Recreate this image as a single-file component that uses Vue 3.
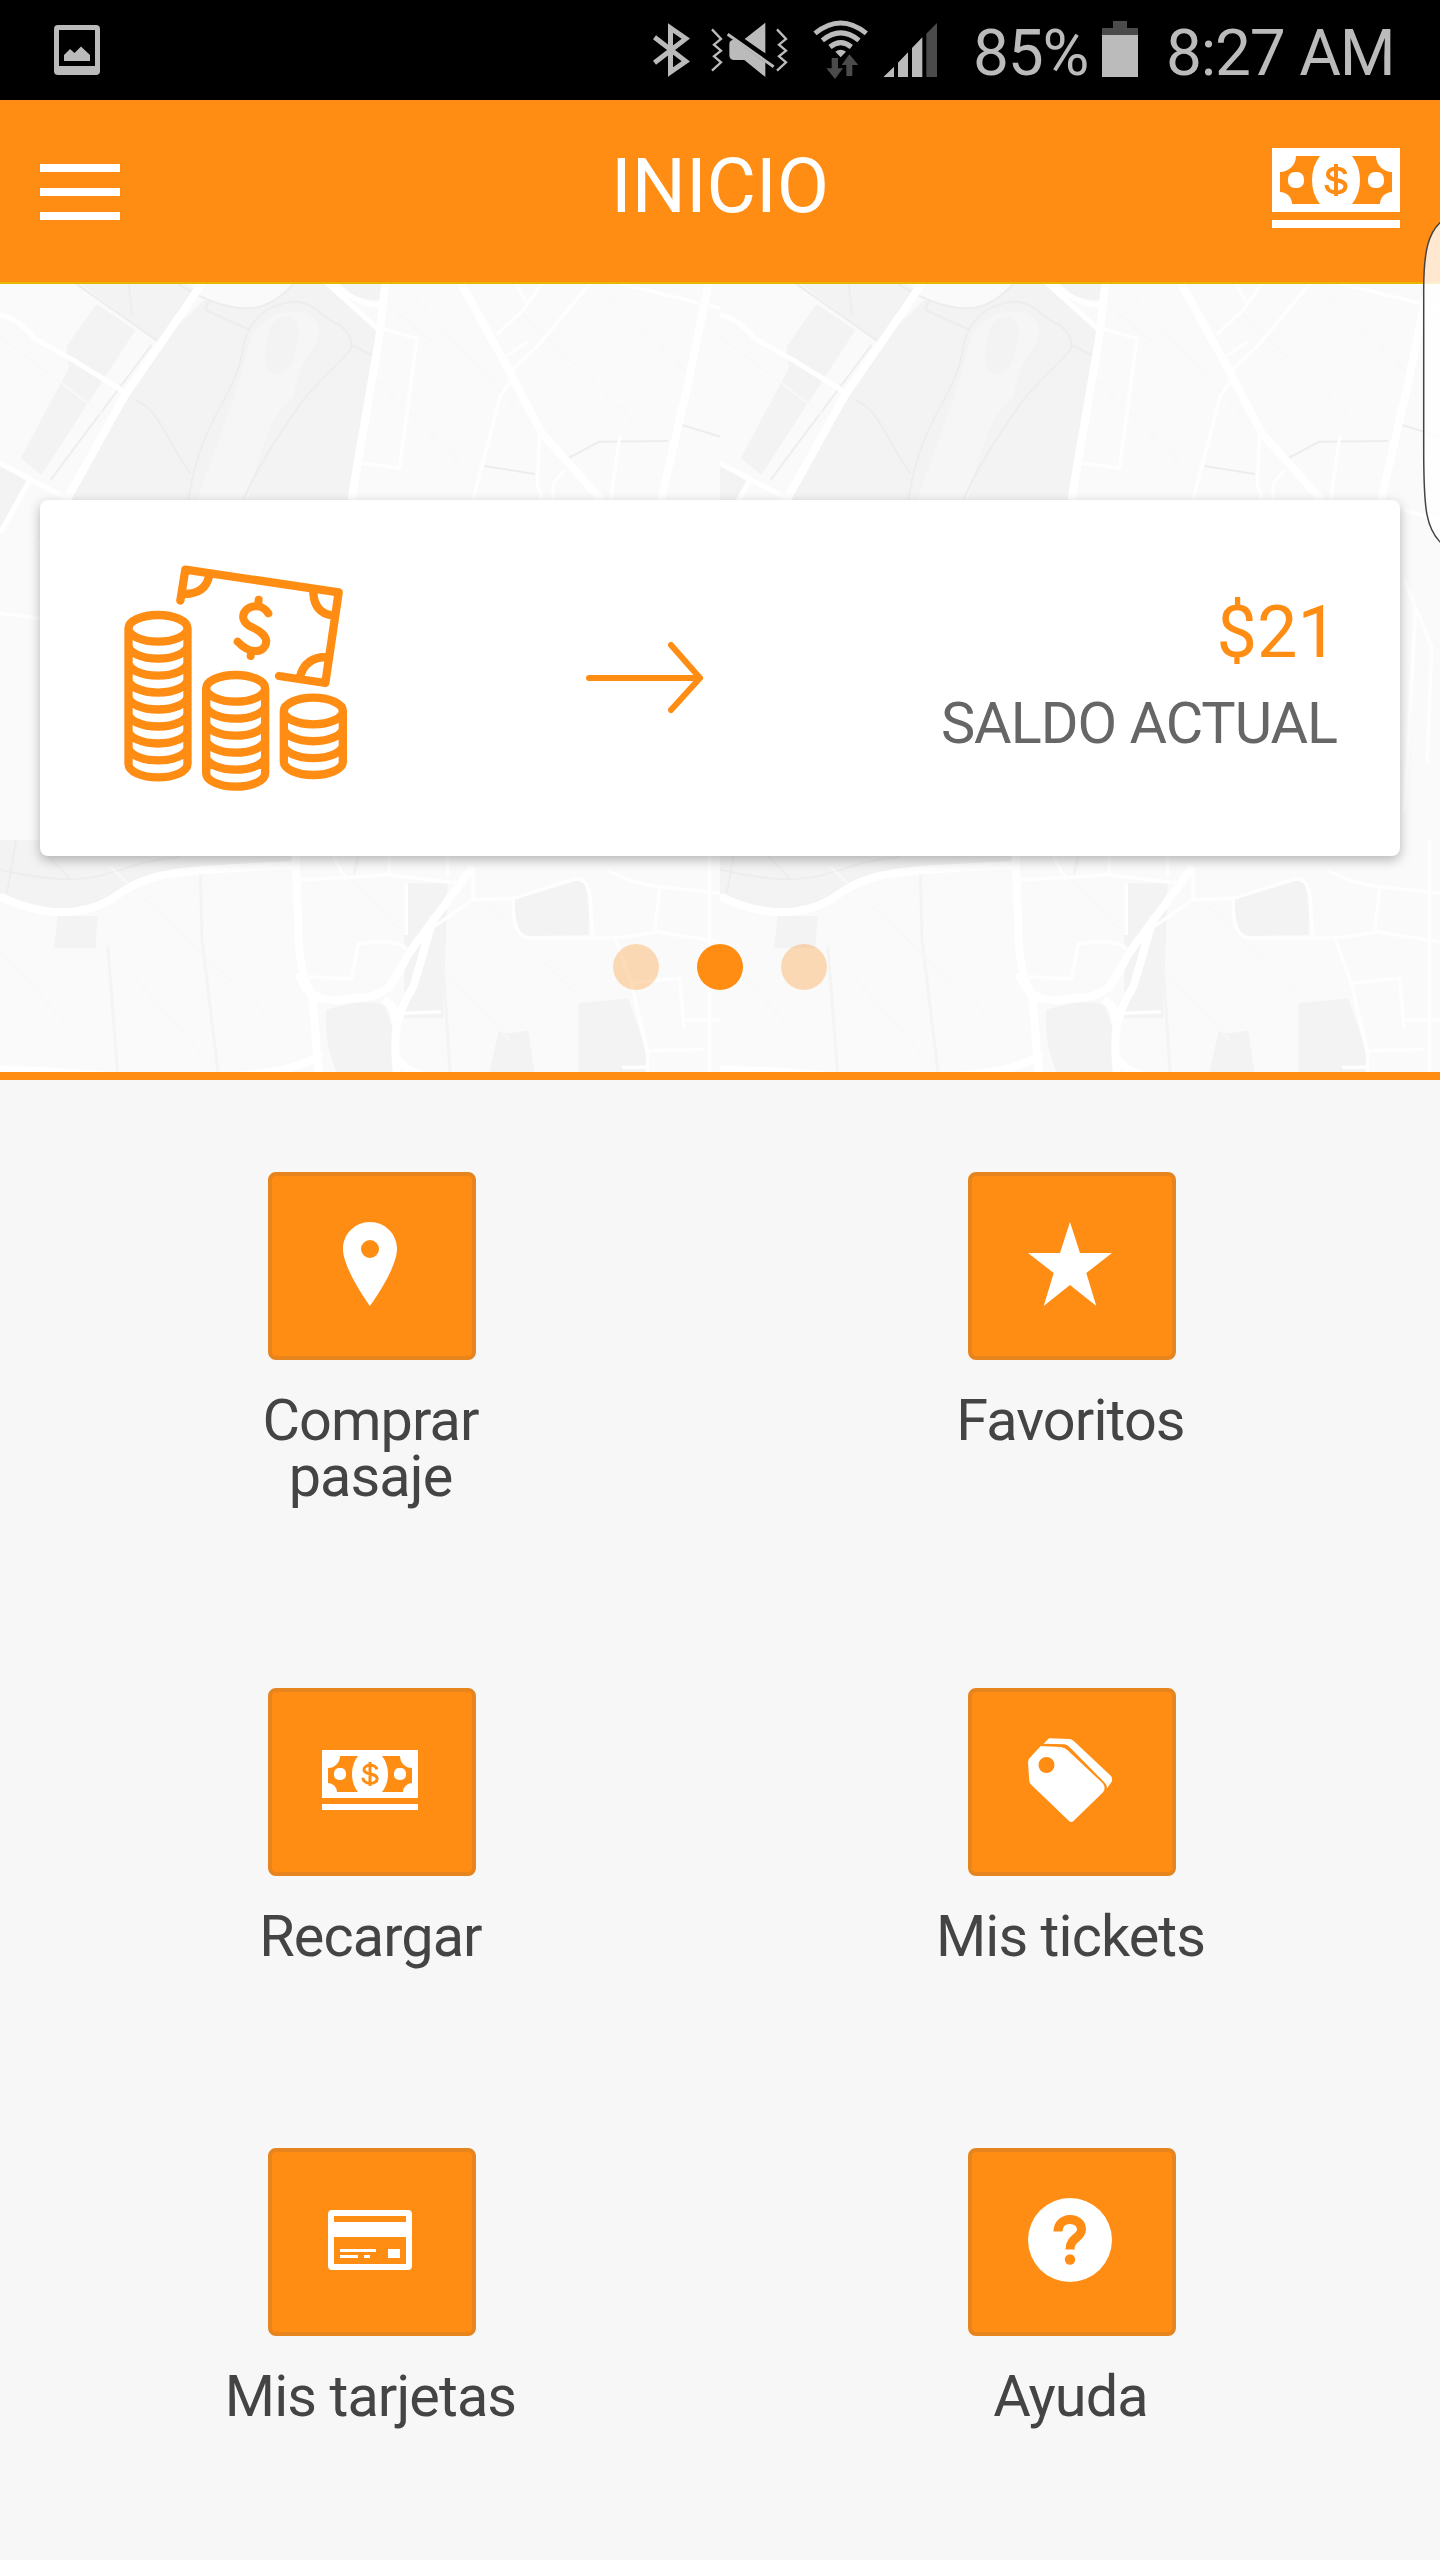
<script setup>
const actions = [
  { icon: 'pin', label: ['Comprar', 'pasaje'] },
  { icon: 'star', label: ['Favoritos'] },
  { icon: 'money', label: ['Recargar'] },
  { icon: 'tags', label: ['Mis tickets'] },
  { icon: 'card', label: ['Mis tarjetas'] },
  { icon: 'help', label: ['Ayuda'] },
]
const slides = [false, true, false]
const stacks = [
  { x: 234, y: 295, coins: 8, step: 50.9 },
  { x: 467, y: 475, coins: 5, step: 51 },
  { x: 700, y: 543, coins: 3, step: 50.7 },
]
const stackPath = (s) => {
  const l = s.x - 88.5
  const end = s.y + s.coins * s.step
  let d = `M${l} ${s.y}a88.5 40 0 0 1 177 0a88.5 40 0 0 1 -177 0V${end}M${l + 177} ${s.y}V${end}`
  for (let i = 1; i <= s.coins; i++) d += `M${l} ${s.y + i * s.step}a88.5 40 0 0 0 177 0`
  return d
}
</script>

<template>
  <div class="screen">
    <svg class="defs" width="0" height="0">
      <symbol id="money" viewBox="0 0 128 80">
        <path fill="#fff" fill-rule="evenodd" d="M0 0H128V64H0zM24 8A16 16 0 0 1 8 24V44A12 12 0 0 1 20 56H48Q40 46 40 32T48 8zM104 8H80Q88 18 88 32T80 56H108A12 12 0 0 1 120 44V24A16 16 0 0 1 104 8z" />
        <path fill="#fff" d="M0 72H128V80H0z" />
        <rect x="16" y="24" width="16" height="16" rx="6.8" fill="#fff" />
        <rect x="96" y="24" width="16" height="16" rx="6.8" fill="#fff" />
        <path d="M64 16V48M73.2 26C72 18.5 56 18.5 56 26.3C56 34 73.5 30 73.5 38.2C73.5 46.6 54.6 46.6 54.6 37" fill="none" stroke="#ff8c13" stroke-width="4" />
      </symbol>
    </svg>

    <div class="status">
      <svg class="shot" width="46" height="100" viewBox="0 0 46 100">
        <path fill="#bbb" fill-rule="evenodd" d="M4 25H42Q46 25 46 29V71Q46 75 42 75H4Q0 75 0 71V29Q0 25 4 25zM5 30V66H41V30zM10 61V55L16 49L20.5 53L27 46.5L36 55V61z" />
      </svg>
      <div class="tray">
        <svg width="37" height="100" viewBox="158 0 110 300">
          <path d="M162 112L256 184L210 216V84L256 116L162 188" fill="none" stroke="#bbb" stroke-width="15" />
        </svg>
        <svg class="vib" width="77" height="100" viewBox="332 0 231 300">
          <path d="M335 88L362 117L341 134L362 152L341 169L362 187L335 212M530 88L557 117L536 134L557 152L536 169L557 187L530 212" fill="none" stroke="#bbb" stroke-width="7" />
          <path fill="#bbb" d="M495 68V160L433 117zM400 119L495 187V231L432 180H402Q387 180 387 165V133Q387 120 400 119z" />
          <path d="M382 103L520 200" stroke="#bbb" stroke-width="9" />
        </svg>
        <svg class="wifi" width="55" height="100" viewBox="638 0 165 300">
          <g fill="none" stroke="#bbb" stroke-width="15">
            <path d="M644 100Q721 38 798 100" /><path d="M666 121Q721 76 776 121" /><path d="M689 141Q721 115 753 141" />
          </g>
          <path fill="#bbb" d="M705 155Q721 143 737 155L721 172z" />
          <path fill="#4b4b4b" d="M694 174H713V205H728L704 237L678 205H694zM747 163L774 195H756V228H738V195H724z" />
        </svg>
        <svg class="signal" width="54" height="100" viewBox="849 0 162 300">
          <path fill="#bbb" d="M850 231L882 200V231zM894 231V188L924 157V231zM936 231V144L967 112V231z" />
          <path fill="#4b4b4b" d="M979 231V101L1011 69V231z" />
        </svg>
        <span class="percent">85%</span>
        <svg class="battery" width="36" height="100" viewBox="0 0 36 100">
          <path fill="#4b4b4b" d="M11 21H25V28H36V35H0V28H11z" /><path fill="#bbb" d="M0 35H36V77H0z" />
        </svg>
        <span class="clock">8:27 AM</span>
      </div>
    </div>

    <header class="bar">
      <div class="menu"><i></i><i></i><i></i></div>
      <h1>INICIO</h1>
      <svg class="cash" width="128" height="80"><use href="#money" /></svg>
    </header>

    <section class="hero">
      <svg class="map" width="1440" height="788" viewBox="0 0 1440 788">
        <g v-for="x in [0, 720]" :key="x" :transform="`translate(${x} 0)`">
          <svg width="720" height="788">
            <g class="geo" transform="translate(0 -4) scale(.4592 .33333)">
              <path class="park" d="M165 0L345 185L445 0zM210 72L295 150L90 585L45 535L150 265L145 200zM0 555L65 610L0 750z" />
              <path class="park" d="M445 60L540 90L650 0H840L770 660H150L350 185z" />
              <path class="land" d="M400 0Q460 80 540 85Q600 85 645 0zM700 0L825 150L832 60Q770 65 725 0z" />
              <path class="lawn" d="M430 660C470 500 520 330 545 180C570 90 670 60 695 140C700 210 650 220 640 350C590 390 560 540 540 660z" />
              <path class="park" d="M580 190Q590 100 630 110Q665 120 640 230Q625 290 590 280Q570 260 580 190z" />
              <path class="trail" d="M165 10L345 185L415 40M280 10L288 105M385 10Q470 85 540 85Q590 85 640 10M455 60L447 90L545 150M410 660C440 400 510 370 530 200C545 90 610 65 645 65C700 75 700 120 740 135C770 175 765 180 765 205C730 270 690 300 650 380C610 460 560 560 530 660M765 195L810 225M295 360C350 390 360 480 415 580M330 195L110 600M1230 540L1305 485L1455 483M1055 558L1165 582M1485 435L1568 470" />
              <path class="faint" d="M0 170L230 410M900 50L1200 500M1310 20L1500 285M1130 90L1400 450M820 300L1040 600M850 80L970 220" />
              <path class="wide" d="M445 0L270 350L145 660L90 800M840 0L825 180L765 660M1000 0L1100 250L1180 460L1310 660M1545 0L1500 300L1440 660" />
              <path class="mid" d="M0 105Q35 110 75 175L165 245L275 340M0 550L145 655M65 600L0 760M705 0L825 150M725 0Q770 75 825 75" />
              <path class="thin" d="M830 145L908 175L870 565L785 548M1120 0L1145 65M1180 10L1140 90L1080 165M1150 185L1095 235M1285 10L1170 200L1115 270M1115 300L1090 345L1030 660M1175 450L1170 610L1180 660M1350 465L1330 660M1230 570L1205 610V660M1350 10L1568 85M1490 690L1568 720M0 1000L120 1020L150 1400M1490 900L1550 1100L1540 1450M1440 660V1540M1515 980L1490 1600" />
            </g>
            <g class="geo" transform="translate(0 556) scale(.4592 .33333)">
              <path class="park" d="M0 0H640V70C360 70 310 100 230 190C150 230 80 230 0 160zM125 228H212L208 325H118zM888 130H975L965 535H880V290zM1118 175L1262 118Q1285 130 1282 285L1145 288Q1120 270 1118 175zM710 510Q780 475 835 492Q865 560 857 705H735Q705 610 710 510zM1065 705L1085 575L1110 580L1150 572L1165 705zM1260 705V490L1368 475L1410 640V705z" />
              <path class="trail" d="M0 90Q100 120 160 118C240 115 280 65 390 50M35 0L15 160M105 50L150 112" />
              <path class="lane" d="M435 40L440 300L475 700M235 320L256 700M960 250L980 700M780 50L770 110" />
              <path class="faint" d="M240 80L640 600M720 50L870 270M1050 180L1260 470M0 330L150 560M280 390L450 660M980 410L1110 600" />
              <path class="wide" d="M0 170C100 235 180 225 240 180C330 90 370 95 640 75M642 0L650 260Q650 400 680 470L695 710M650 400C670 480 710 490 770 475C850 475 860 420 890 340L1030 80M945 230L900 440C860 530 855 580 865 710M835 480Q865 500 860 550M0 690Q110 690 250 710M480 710Q650 700 700 640M860 640Q870 690 930 710" />
              <path class="thin" d="M650 120L850 105L1000 130M755 120L725 50M848 50V105M885 130V285M975 50V110M670 410L765 417L780 312Q880 290 890 340M1030 80V180L945 260M1030 180L1118 175L1250 118Q1280 110 1285 170L1290 285M1118 175Q1115 290 1150 293H1350L1430 275L1568 305M1325 90Q1370 130 1440 140L1568 160M1437 145L1425 275M1340 295L1375 430L1410 640V700M1370 430L1480 415L1490 565M1485 540H1568M1545 0V700M1410 632L1535 628M1355 682H1410M880 520L960 515" />
            </g>
          </svg>
        </g>
      </svg>

      <article class="balance">
        <svg class="coins" width="320" height="290" viewBox="0 0 960 870">
          <g fill="none" stroke="#ff8c13" stroke-width="25" stroke-linecap="round" stroke-linejoin="round">
            <path v-for="s in stacks" :key="s.x" :d="stackPath(s)" />
            <path d="M301 212L316 119L776 187L736 459L597 438M387 140Q375 191 315 192M700 190Q704 248 755 256M660 440Q676 381 740 381" />
            <path stroke-width="24" d="M565 250C550 225 520 224 503 236C480 255 488 279 515 291C550 307 565 325 556 346C543 371 507 370 473 335M536 209L534 224M512 378L514 362" />
          </g>
        </svg>
        <svg class="arrow" width="118" height="74" viewBox="586 641 118 74">
          <path d="M589 678H700M671 645L700 678L671 710" fill="none" stroke="#ff8c13" stroke-width="6" stroke-linecap="round" stroke-linejoin="round" />
        </svg>
        <div class="amount">
          <strong>$21</strong>
          <span>SALDO ACTUAL</span>
        </div>
      </article>

      <div class="dots"><i v-for="(on, i) in slides" :key="i" :class="{ on }"></i></div>
    </section>

    <main class="grid">
      <div v-for="a in actions" :key="a.icon" class="action">
        <button class="tile">
          <svg v-if="a.icon === 'money'" width="96" height="60"><use href="#money" /></svg>
          <svg v-else width="84" height="84" viewBox="0 0 84 84" fill="#fff">
            <path v-if="a.icon === 'pin'" fill-rule="evenodd" d="M42 0C27 0 15 12 15 27C15 47 42 84 42 84S69 47 69 27C69 12 57 0 42 0zM42 18A9 9 0 1 1 42 36A9 9 0 1 1 42 18z" />
            <path v-else-if="a.icon === 'star'" d="M42 0L52 31H84L58.3 51L68.3 84L42 63L15.7 84L25.7 51L0 31H32z" />
            <template v-else-if="a.icon === 'tags'">
              <path fill-rule="evenodd" d="M12.8 8L33 9Q37 9.500 40.200 12.700L75 45.500Q78 50 75.300 54L45.500 83Q43.200 85 41 83L3.500 47Q1.300 45 1.200 42.500L0 24Q0 21 3 18.500zM18.500 19A8 8 0 1 0 18.500 35A8 8 0 1 0 18.500 19z" />
              <path d="M15.500 5.700L21 .3L42 1Q44.500 1.500 46.600 3.700L83 38Q85 41 83.500 44L79 50.300Q79 46.500 76 44L41.500 9Q39 6.500 36.400 6.300z" />
            </template>
            <template v-else-if="a.icon === 'card'">
              <path fill-rule="evenodd" d="M4 12H80Q84 12 84 16V68Q84 72 80 72H4Q0 72 0 68V16Q0 12 4 12zM6 18V24H78V18zM6 39V66H78V39z" />
              <path d="M12 51H48V54H12zM12 57H30V60H12zM36 57H42V60H36zM60 51H72V60H60z" />
            </template>
            <template v-else>
              <circle cx="42" cy="42" r="42" />
              <path d="M30 33.500C30 17.500 53.500 18 53.500 31.500C53.500 40 42 39.500 42 51.500" fill="none" stroke="#ff8c13" stroke-width="9" />
              <circle cx="42" cy="61.500" r="5.200" fill="#ff8c13" />
            </template>
          </svg>
        </button>
        <p><span v-for="l in a.label" :key="l">{{ l }}</span></p>
      </div>
    </main>

    <svg class="edge" width="20" height="326" viewBox="1420 219 20 326">
      <path d="M1442 221C1428 232 1423.700 252 1423.700 290V450C1423.700 510 1426 529 1442 544" fill="#fff" fill-opacity=".8" stroke="#444" stroke-width="1.500" />
    </svg>
  </div>
</template>

<style>
body { margin: 0; background: #f7f7f7; }
</style>

<style scoped>
.screen { position: relative; width: 1440px; height: 2560px; overflow: hidden; background: #f7f7f7; font-family: Roboto, sans-serif; }
svg { display: block; flex: none; }
.defs { position: absolute; }
.status { display: flex; justify-content: space-between; height: 100px; background: #000; color: #bbb; font-size: 64px; line-height: 100px; letter-spacing: -1.200px; }
.shot { margin-left: 54px; }
.tray { display: flex; width: 787px; white-space: nowrap; }
.vib { margin-left: 21px; }
.wifi { margin-left: 25px; }
.signal { margin-left: 15px; }
.percent { width: 129px; margin-left: 36px; padding-top: 4px; height: 96px; }
.clock { margin-left: 28px; padding-top: 4px; height: 96px; }
.bar { display: flex; justify-content: space-between; align-items: flex-start; box-sizing: border-box; height: 184px; padding: 0 40px; background: #ff8c13; border-bottom: 2px solid #e6b800; }
.menu { display: flex; flex-direction: column; gap: 16px; width: 128px; padding-top: 64px; }
.menu i { width: 80px; height: 8px; background: #fff; }
h1 { margin: 42px 0 0; color: #fff; font-size: 76px; font-weight: 400; line-height: 88px; }
.cash { margin-top: 48px; }
.hero { position: relative; display: flex; flex-direction: column; align-items: center; box-sizing: border-box; height: 796px; padding-top: 216px; background: #fafafa; border-bottom: 8px solid #ff8c13; overflow: hidden; }
.map { position: absolute; inset: 0; }
.geo path { fill: none; vector-effect: non-scaling-stroke; stroke-linejoin: round; }
.geo .park { fill: #f3f3f3; }
.geo .land { fill: #fafafa; }
.geo .lawn { fill: #f6f6f6; }
.geo .trail { stroke: #ededed; stroke-width: 2px; }
.geo .lane { stroke: #f4f4f4; stroke-width: 3px; }
.geo .faint { stroke: #f8f8f8; stroke-width: 2px; }
.geo .wide { stroke: #fff; stroke-width: 8px; }
.geo .mid { stroke: #fff; stroke-width: 5px; }
.geo .thin { stroke: #fefefe; stroke-width: 3.500px; }
.balance { position: relative; display: flex; align-items: center; box-sizing: border-box; width: 1360px; height: 356px; padding: 0 63px 0 40px; background: #fff; border-radius: 8px; box-shadow: 0 4px 12px rgba(0, 0, 0, .28); }
.coins { margin-top: -6px; }
.arrow { margin-left: 186px; }
.amount { display: flex; flex-direction: column; align-items: flex-end; margin-left: auto; padding-top: 2px; white-space: nowrap; }
.amount strong { margin-right: -1px; color: #ff8c13; font-size: 72px; font-weight: 400; line-height: 90px; }
.amount span { color: #666; font-size: 57.600px; line-height: 92px; letter-spacing: -1px; }
.dots { position: relative; display: flex; gap: 38px; margin-top: 88px; }
.dots i { width: 46px; height: 46px; border-radius: 50%; background: #ff8c13; opacity: .3; }
.dots .on { opacity: 1; }
.grid { display: grid; grid-template-columns: 1fr 1fr; grid-template-rows: 516px 460px 400px; padding: 92px 20px 0; }
.action { display: flex; flex-direction: column; align-items: center; }
.tile { display: flex; justify-content: center; align-items: center; box-sizing: border-box; width: 208px; height: 188px; margin: 0 0 0 4px; padding: 0 4px 4px 0; border: 4px solid #e6841e; border-radius: 8px; background: #ff8c13; }
.action p { display: flex; flex-direction: column; align-items: center; margin: 33px 0 0 1px; color: #444; font-size: 57.600px; line-height: 56px; letter-spacing: -.9px; white-space: nowrap; }
.edge { position: absolute; top: 219px; right: 0; }
</style>
